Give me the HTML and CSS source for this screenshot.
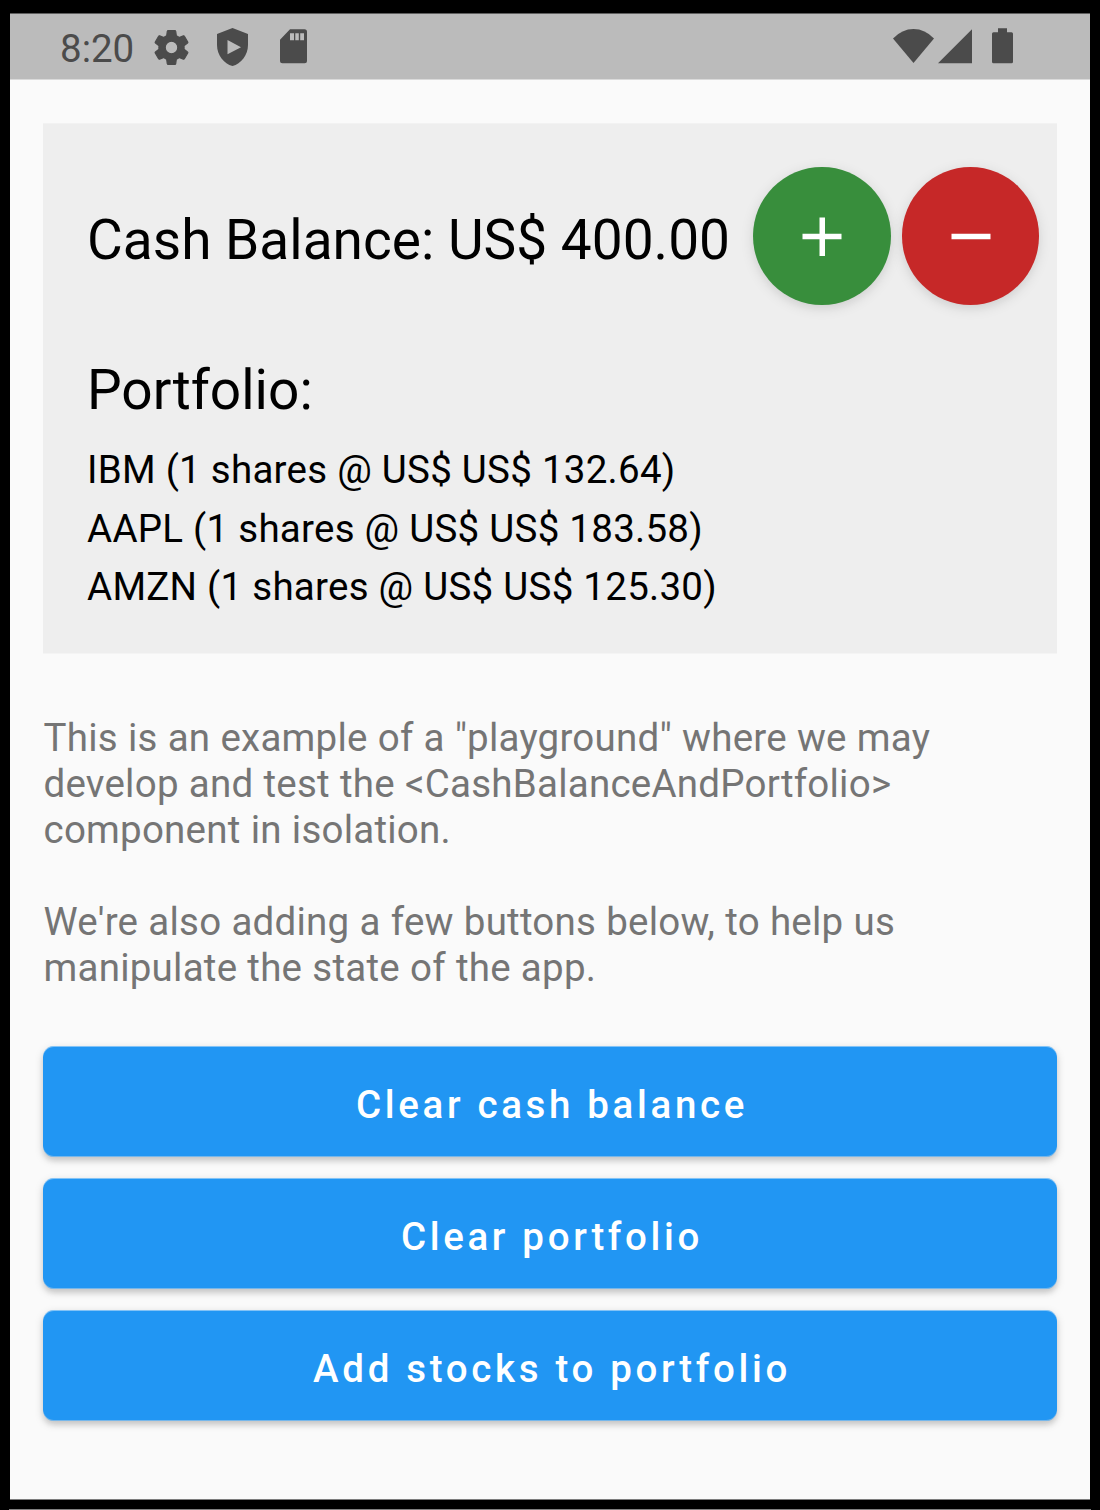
FILE: index.html
```html
<!DOCTYPE html>
<html lang="en">
<head>
<meta charset="utf-8">
<title>Cash Balance and Portfolio</title>
<link rel="stylesheet" href="styles.css">
</head>
<body>
<div class="screen">
  <header class="status-bar">
    <span class="clock">8:20</span>
    <svg class="icon-gear" viewBox="2 2 20 20"><path d="M19.14 12.94c.04-.3.06-.61.06-.94 0-.32-.02-.64-.07-.94l2.03-1.58c.18-.14.23-.41.12-.61l-1.92-3.32c-.12-.22-.37-.29-.59-.22l-2.39.96c-.5-.38-1.03-.7-1.62-.94l-.36-2.54c-.04-.24-.24-.41-.48-.41h-3.84c-.24 0-.43.17-.47.41l-.36 2.54c-.59.24-1.13.57-1.62.94l-2.39-.96c-.22-.08-.47 0-.59.22L2.74 8.87c-.12.21-.08.47.12.61l2.03 1.58c-.05.3-.09.63-.09.94s.02.64.07.94l-2.03 1.58c-.18.14-.23.41-.12.61l1.92 3.32c.12.22.37.29.59.22l2.39-.96c.5.38 1.03.7 1.62.94l.36 2.54c.05.24.24.41.48.41h3.84c.24 0 .44-.17.47-.41l.36-2.54c.59-.24 1.13-.56 1.62-.94l2.39.96c.22.08.47 0 .59-.22l1.92-3.32c.12-.22.07-.47-.12-.61l-2.01-1.58zM12 15.6c-1.98 0-3.6-1.62-3.6-3.6s1.62-3.6 3.6-3.6 3.6 1.62 3.6 3.6-1.62 3.6-3.6 3.6z"/></svg>
    <svg class="icon-shield" viewBox="0 0 31 38"><path fill-rule="evenodd" d="M15.500 0L31 6V17C31 27 24 36 15.500 38C7 36 0 27 0 17V6ZM10.500 12V26.300L24 19.200Z"/></svg>
    <svg class="icon-card" viewBox="0 0 27 34"><path fill-rule="evenodd" d="M10 0H24.500Q27 0 27 2.500V31.500Q27 34 24.500 34H2.500Q0 34 0 31.500V10.500ZM10 4V11H14V4ZM15.300 4V11H18.800V4ZM20.200 4V11H24V4Z"/></svg>
    <span class="status-spacer"></span>
    <svg class="icon-wifi" viewBox="0 0 41 34"><path d="M0 9.500Q9 0 20.500 0T41 9.500L20.500 34Z"/></svg>
    <svg class="icon-signal" viewBox="0 0 34 34"><path d="M0 34L34 0V34Z"/></svg>
    <svg class="icon-battery" viewBox="0 0 21 35"><path d="M6 0H15V4H19.500Q21 4 21 5.500V33.500Q21 35 19.500 35H1.500Q0 35 0 33.500V5.500Q0 4 1.500 4H6Z"/></svg>
  </header>
  <main class="content">
    <section class="panel">
      <div class="balance-row">
        <h1 class="heading">Cash Balance: US$ 400.00</h1>
        <div class="round-buttons">
          <button class="round add" aria-label="Add"><svg viewBox="0 0 138 138"><path d="M66.500 50.500H72V66.700H88.500V72.200H72V89H66.500V72.200H49.500V66.700H66.500Z"/></svg></button>
          <button class="round remove" aria-label="Remove"><svg viewBox="0 0 138 138"><path d="M49.500 66.700H88.500V72.200H49.500Z"/></svg></button>
        </div>
      </div>
      <h2 class="heading">Portfolio:</h2>
      <ul class="stocks">
        <li>IBM (1 shares @ US$ US$ 132.64)</li>
        <li>AAPL (1 shares @ US$ US$ 183.58)</li>
        <li>AMZN (1 shares @ US$ US$ 125.30)</li>
      </ul>
    </section>
    <div class="description">
      <p>This is an example of a "playground" where we may<br>develop and test the &lt;CashBalanceAndPortfolio&gt;<br>component in isolation.</p>
      <p>We're also adding a few buttons below, to help us<br>manipulate the state of the app.</p>
    </div>
    <div class="actions">
      <button class="action">Clear cash balance</button>
      <button class="action">Clear portfolio</button>
      <button class="action">Add stocks to portfolio</button>
    </div>
  </main>
</div>
</body>
</html>
```
FILE: styles.css
```css
* { box-sizing: border-box; }

body {
  margin: 0;
  height: 1510px;
  padding: 13px 10px 0;
  background: #000;
  border-bottom: 1px solid #808080;
  border-image: linear-gradient(to right, #000 10px, #808080 10px, #808080 1090px, #000 1090px) 1;
  font-family: Roboto, "Liberation Sans", sans-serif;
  font-size: 38.5px;
  overflow: hidden;
}

.screen {
  height: 1487px;
  background: #fafafa;
  border-bottom: 1px solid #7d7d7d;
}

.status-bar {
  display: flex;
  align-items: flex-start;
  height: 67px;
  padding: 14px 77px 0 50px;
  background: #bbb;
  border-top: 1px solid #5e5e5e;
  border-bottom: 1px solid #dadada;
}

.status-bar svg { display: block; flex: none; fill: #4b4b4b; }
.clock { width: 94px; padding-top: 1px; line-height: 40px; color: #4b4b4b; font-size: 38.5px; }
.icon-gear { width: 35px; height: 35px; margin-top: 1.5px; stroke: #4b4b4b; stroke-width: 0.7; }
.icon-shield { width: 31px; height: 38px; margin-left: 28px; }
.icon-card { width: 27px; height: 34.5px; margin: 1px 0 0 32px; }
.status-spacer { flex: 1; }
.icon-wifi { width: 41px; height: 34px; margin-top: 1px; }
.icon-signal { width: 34px; height: 34.5px; margin: 1px 0 0 4px; }
.icon-battery { width: 21px; height: 35.5px; margin-left: 20px; }

.content { padding: 43px 33px 0; }

.panel {
  height: 531px;
  padding: 43px 18px 0 44px;
  background: #eee;
  border-top: 1px solid #f2f2f2;
  border-bottom: 1px solid #f4f4f4;
}

.balance-row { display: flex; justify-content: space-between; height: 138px; align-items: center; }

.heading {
  margin: 0;
  font-size: 55px;
  font-weight: 400;
  line-height: 65px;
  letter-spacing: 0.01px;
  color: #000;
  white-space: nowrap;
}

.balance-row .heading { margin-top: 8px; }
.panel > .heading { margin-top: 53px; }

.round-buttons { display: flex; gap: 11px; }

.round {
  width: 137.5px;
  height: 138px;
  padding: 0;
  border: 0;
  border-radius: 50%;
  box-shadow: 0 3px 14px rgba(0, 0, 0, 0.11), 0 4px 6px rgba(0, 0, 0, 0.03);
}

.round svg { display: block; width: 138px; height: 138px; fill: #fff; }
.add { background: #388e3c; }
.remove { background: #c62828; }

.stocks {
  margin: 18px 0 0;
  padding: 0;
  list-style: none;
  line-height: 58.5px;
  letter-spacing: 0.26px;
}

.description {
  margin-top: 60.5px;
  padding-left: 0.5px;
  line-height: 46px;
  letter-spacing: 0.23px;
  word-spacing: 0.3px;
  color: #757575;
}

.description p { margin: 0; white-space: nowrap; }
.description p + p { margin-top: 46px; }

.actions { display: flex; flex-direction: column; gap: 21px; margin-top: 55.5px; }

.action {
  height: 111px;
  padding: 5px 0 0 4px;
  border: 0;
  border-radius: 11px;
  background: #2196f3;
  color: #fff;
  font: 500 38.5px Roboto, "Liberation Sans", sans-serif;
  letter-spacing: 3.66px;
  box-shadow: inset 0 1px rgba(250, 250, 250, 0.45), inset 0 -1px rgba(225, 225, 225, 0.45), 0 3px 9px rgba(0, 0, 0, 0.17), 0 4px 5px rgba(0, 0, 0, 0.08);
}
```
